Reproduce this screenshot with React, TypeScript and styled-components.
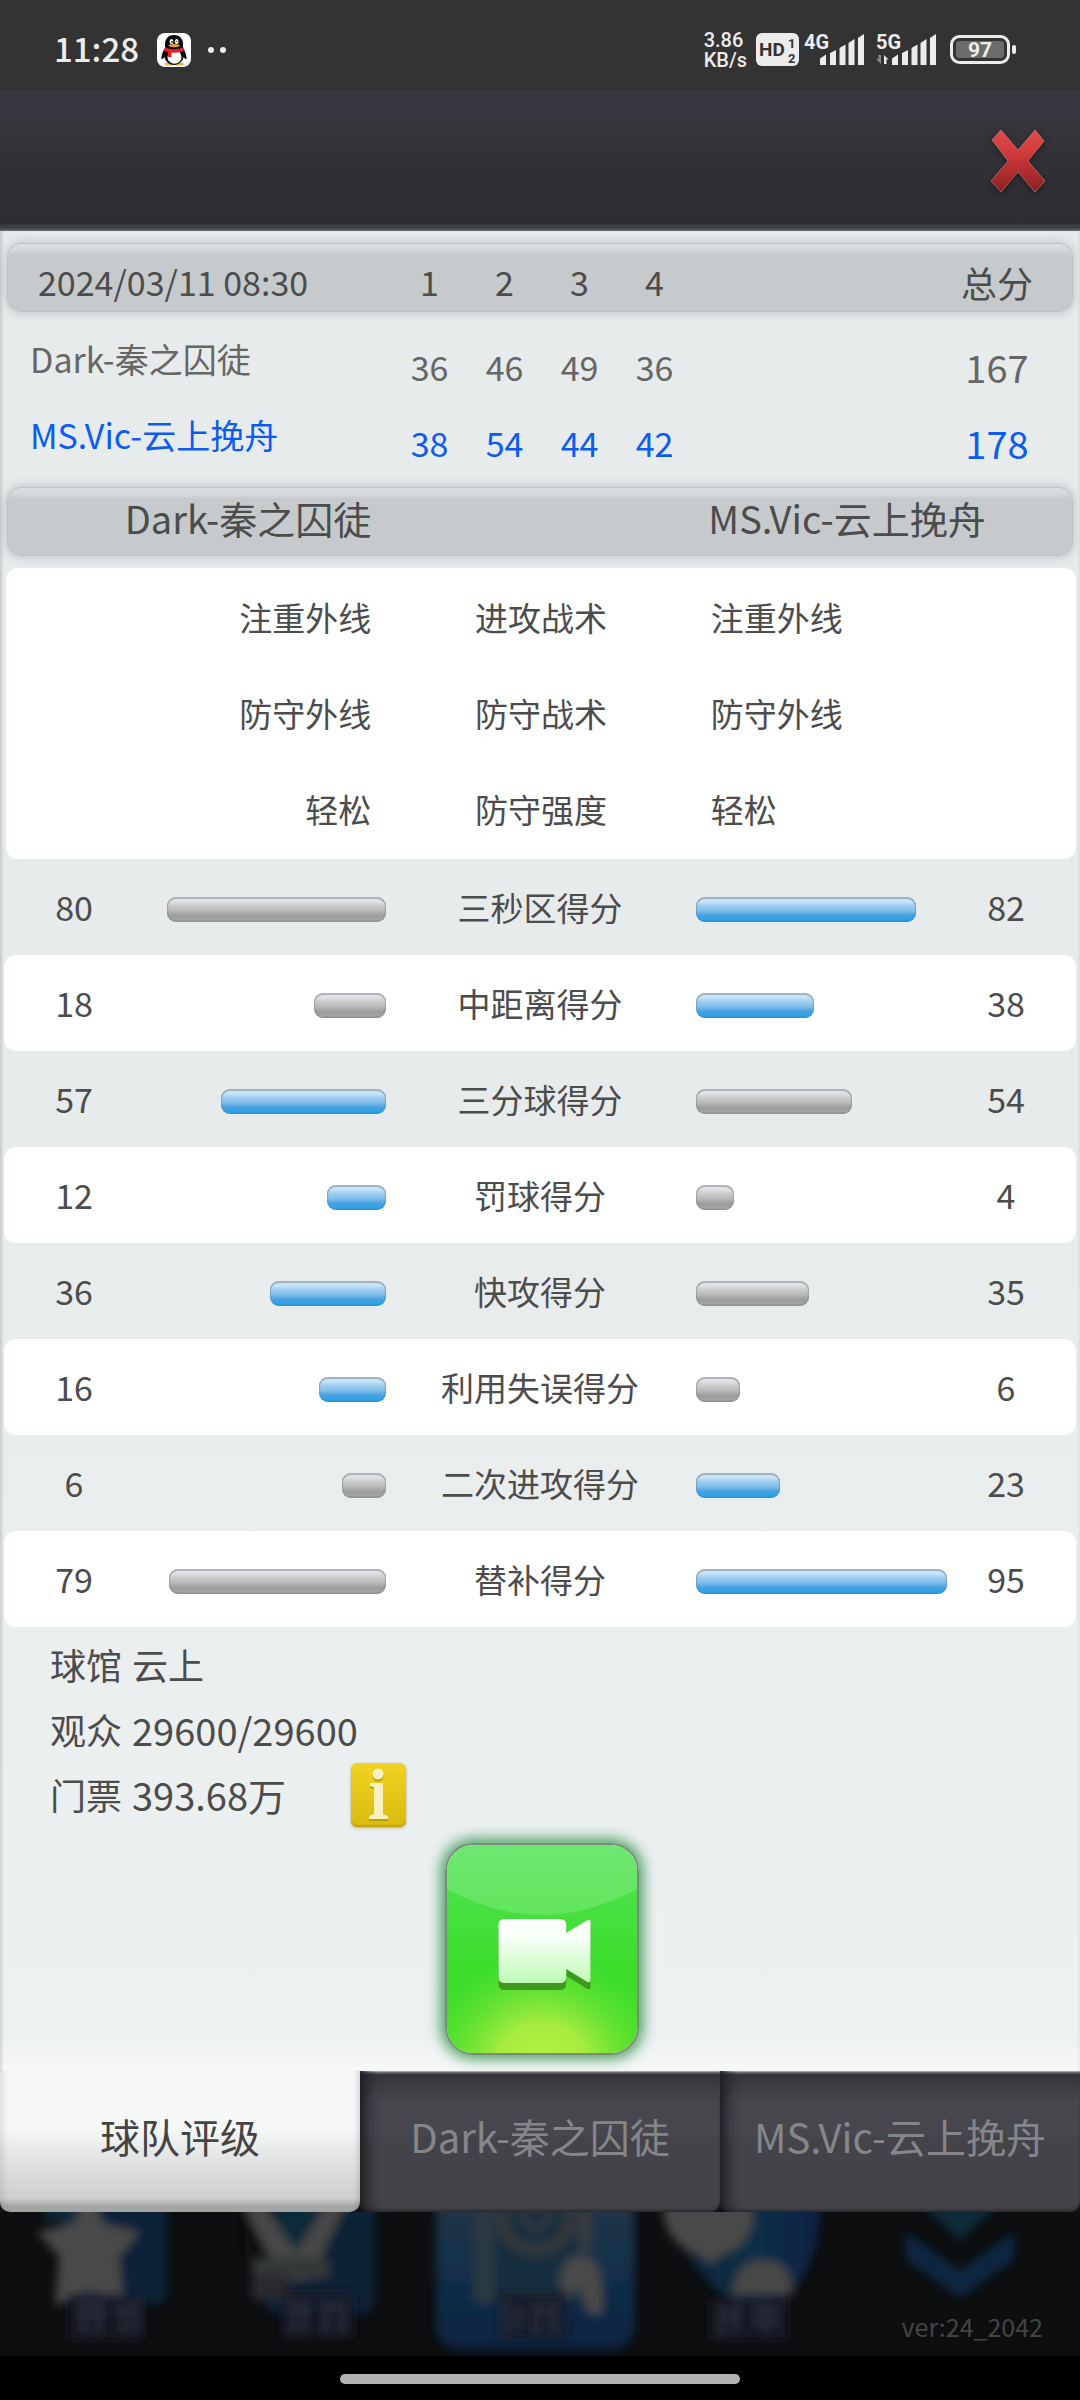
import React, { useState } from 'react';
import styled, { createGlobalStyle, css } from 'styled-components';

const GlobalStyle = createGlobalStyle`
  *, *::before, *::after { box-sizing: border-box; }
  body { margin: 0; background: #000; }
  button, table, th, td, dl, dt, dd, h2 {
    font: inherit; color: inherit; margin: 0; padding: 0; border: 0; background: none;
  }
`;

const Page = styled.div`
  display: flex;
  flex-direction: column;
  min-height: 100vh;
  font-family: "Noto Sans CJK SC", "Noto Sans", sans-serif;
  font-size: 34px;
  line-height: 48px;
  color: #4c4c4c;
  white-space: nowrap;
`;

/* ---------- status bar ---------- */

const StatusBar = styled.div`
  display: flex;
  align-items: center;
  height: 90px;
  padding: 10px 64px 0 54px;
  background: #333;
  color: #ececec;
`;

const Clock = styled.time`
  font-size: 33px;
  font-weight: 500;
  margin: -4px 18px 0 0;
`;

const StatusDots = styled.span`
  display: flex;
  gap: 6px;
  margin-left: 17px;
  &::before, &::after {
    content: "";
    width: 6px;
    height: 6px;
    border-radius: 50%;
    background: #ececec;
  }
`;

const StatusRight = styled.div`
  display: flex;
  align-items: center;
  margin-left: auto;
  font-family: Roboto, sans-serif;
`;

const NetSpeed = styled.span`
  display: flex;
  flex-direction: column;
  margin-right: 9px;
  font-size: 20px;
  font-weight: 500;
  line-height: 20px;
`;

const SignalIcon = styled.svg`
  width: 62px;
  height: 46px;
  margin-left: 5px;
  & + & { margin: 0 12px 0 10px; }
  text { font-weight: 700; font-size: 20px; }
`;

/* ---------- title bar ---------- */

const TitleBar = styled.header`
  display: flex;
  justify-content: flex-end;
  align-items: center;
  height: 141px;
  padding: 0 34px 0 0;
  background: linear-gradient(#38373c 0, #393643 18px, #35343a 36px, #302f34 90px, #2e2d32 134px, #3a3f41 135px, #3a3f41 138px, #6a7270 141px);
`;

const CloseButton = styled.button`
  display: block;
  cursor: pointer;
  svg { display: block; filter: drop-shadow(0 2px 3px #0006); }
`;

/* ---------- report ---------- */

const Report = styled.main`
  display: flex;
  flex-direction: column;
  padding: 13px 4px 16px;
  background: linear-gradient(#e7ebec 0, #e7ebec 50%, #edf1f2 98%, #f7f8f8 100%);
  box-shadow: inset 3px 0 3px -1px #0002, inset -3px 0 3px -2px #0001;
`;

const barLook = css`
  height: 67px;
  margin: 0 4px;
  border-radius: 14px;
  background: linear-gradient(#dbdfe1 0, #d3d7d9 7px, #c6cacd 11px, #c6cacd 100%);
  box-shadow: 0 0 0 1px #bdc1c2, 0 0 8px 3px #8d969966;
`;

const ScoreTable = styled.table`
  display: block;
  thead, tbody { display: block; }
  th { font-weight: 400; }
`;

const scoreColumns = css`
  display: grid;
  grid-template-columns: 384fr repeat(4, 75fr) 230fr 150fr;
  align-items: center;
`;

const ScoreHead = styled.tr`
  ${barLook}
  ${scoreColumns}
  padding-top: 8px;
  th:first-child { text-align: left; padding-left: 30px; }
  th:last-child { grid-column: 7; font-size: 36px; }
`;

const ScoreRow = styled.tr<{ $winner?: boolean }>`
  ${scoreColumns}
  height: 76px;
  margin: 0 4px;
  color: ${p => (p.$winner ? '#0c5cf2' : '#666')};
  text-align: center;
  th { text-align: left; padding: 0 0 16px 22px; }
  td:last-child { grid-column: 7; font-size: 38px; }
`;

const ScoreBody = styled.tbody`
  padding: 18px 0 7px;
`;

const TeamsBar = styled.div`
  ${barLook}
  display: grid;
  grid-template-columns: 480fr 134fr 450fr;
  align-items: center;
  padding-bottom: 8px;
  font-size: 38px;
  text-align: center;
`;

const TeamTitle = styled.h2`
  font-weight: 400;
  &:last-child { grid-column: 3; }
`;

const TacticsTable = styled.table`
  display: block;
  margin: 13px 0 0 2px;
  border-radius: 12px;
  background: #fff;
  font-size: 33px;
  tbody { display: block; padding: 1px 0 2px; }
`;

const TacticsRow = styled.tr`
  display: grid;
  grid-template-columns: 366fr 340fr 366fr;
  align-items: center;
  height: 96px;
  th { font-weight: 400; }
  td:first-child { text-align: right; }
`;

const StatsTable = styled.table`
  display: block;
  tbody { display: block; }
`;

const StatRow = styled.tr`
  display: grid;
  grid-template-columns: 124fr 258fr 308fr 258fr 124fr;
  align-items: center;
  height: 96px;
  border-radius: 12px;
  text-align: center;
  &:nth-child(even) { background: #fff; }
  th { font-weight: 400; font-size: 33px; }
`;

const StatValue = styled.td<{ $side: 'home' | 'away' }>`
  padding: ${p => (p.$side === 'home' ? '0 0 0 16px' : '0 16px 0 0')};
`;

const Track = styled.td<{ $side: 'home' | 'away' }>`
  display: flex;
  justify-content: ${p => (p.$side === 'home' ? 'flex-end' : 'flex-start')};
  padding: ${p => (p.$side === 'home' ? '4px 0 0' : '4px 0 0 2px')};
`;

const Bar = styled.div<{ $lead: boolean }>`
  height: 25px;
  border-radius: 9px;
  background: ${p =>
    p.$lead
      ? 'linear-gradient(#d3ecf9 0, #c5e3f6 20%, #a9d1f1 30%, #7fbdea 55%, #4da2df 72%, #2ea4e8 88%, #2b93d6 100%)'
      : 'linear-gradient(#ececec 0, #e0e0e0 20%, #cecece 32%, #b8b8b8 55%, #9c9c9c 75%, #a2a2a2 90%, #8f8f8f 100%)'};
  box-shadow: inset 0 2px 1px #56667566, inset 1px 0 1px #56667544, inset -1px 0 1px #56667544;
`;

const Arena = styled.dl`
  display: flex;
  flex-direction: column;
  padding: 5px 46px 0;
  font-size: 36px;
  line-height: 65px;
`;

const ArenaLine = styled.div`
  display: flex;
  align-items: center;
  gap: 10px;
`;

const ArenaValue = styled.dd`
  min-width: 209px;
`;

const ArenaFigure = styled(ArenaValue)`
  font-size: 38px;
`;

const InfoButton = styled.button`
  width: 55px;
  height: 64px;
  border-radius: 6px;
  background: linear-gradient(#f0d324, #d9bb10);
  box-shadow: inset 0 -2px 1px #a8900c88, 0 1px 3px #8a7a2088;
  cursor: pointer;
  svg { display: block; }
`;

const ReplayButton = styled.button`
  align-self: center;
  width: 194px;
  height: 212px;
  margin: 16px 0 0 4px;
  border-radius: 28px;
  overflow: hidden;
  border: 2px solid #7b8a7b;
  box-shadow: 0 0 14px 4px #1f8a3ccc;
  cursor: pointer;
  svg { display: block; width: 100%; height: 100%; }
`;

/* ---------- tabs ---------- */

const Tabs = styled.div`
  display: grid;
  grid-template-columns: repeat(3, minmax(0, 1fr));
  background: #101214;
`;

const Tab = styled.button<{ $active: boolean }>`
  height: 141px;
  padding-bottom: 11px;
  border-radius: 0 0 10px 10px;
  font-size: 40px;
  cursor: pointer;
  ${p =>
    p.$active
      ? css`
          color: #444;
          background: linear-gradient(#f6f9f8 0, #f6f9f8 40%, #e4e6e5 60%, #cfd1d0 90%, #a4a6a4 96%, #a4a6a4 100%);
          box-shadow: inset 8px 0 8px -6px #0002, inset -6px 0 6px -5px #0003;
        `
      : css`
          color: #85868a;
          background: linear-gradient(#c9cccc 0, #55575a 2px, #35343a 4px, #3b3a40 12px, #47464d 32px, #48474e 64px, #444349 66px, #444349 100%);
          box-shadow: inset 16px 0 14px -10px #1c1b20, inset 0 -3px 3px -1px #2c2b30;
        `}
`;

/* ---------- dimmed app navigation behind the report ---------- */

const Backdrop = styled.footer`
  display: grid;
  height: 144px;
  overflow: hidden;
  background: #0d0e10;
  > * { grid-area: 1 / 1; }
  > svg { width: 100%; height: 144px; }
`;

const Version = styled.small`
  align-self: end;
  justify-self: end;
  padding: 0 37px 10px 0;
  font-size: 25px;
  line-height: 40px;
  color: #444;
  z-index: 1;
`;

const GestureArea = styled.div`
  display: flex;
  justify-content: center;
  flex: 1;
  padding-top: 18px;
  background: #000;
  &::before {
    content: "";
    width: 37%;
    height: 10px;
    border-radius: 5px;
    background: #b2b2b2;
  }
`;

const HOME = 'Dark-秦之囚徒';
const AWAY = 'MS.Vic-云上挽舟';

const scores = [
  { team: HOME, quarters: [36, 46, 49, 36], total: 167 },
  { team: AWAY, quarters: [38, 54, 44, 42], total: 178 },
];

const tactics = [
  ['注重外线', '进攻战术', '注重外线'],
  ['防守外线', '防守战术', '防守外线'],
  ['轻松', '防守强度', '轻松'],
];

const stats: [number, string, number][] = [
  [80, '三秒区得分', 82],
  [18, '中距离得分', 38],
  [57, '三分球得分', 54],
  [12, '罚球得分', 4],
  [36, '快攻得分', 35],
  [16, '利用失误得分', 6],
  [6, '二次进攻得分', 23],
  [79, '替补得分', 95],
];

const barWidth = (value: number) => `${Math.round(((value + 13) / 110) * 100)}%`;

function QQIcon() {
  return (
    <svg width="34" height="34" viewBox="0 0 34 34" aria-label="QQ">
      <rect width="34" height="34" rx="8" fill="#fff" />
      <ellipse cx="12" cy="31" rx="4.5" ry="1.6" fill="#e8b84a" />
      <ellipse cx="22.5" cy="31" rx="4.5" ry="1.6" fill="#e8b84a" />
      <path d="M17 2c-6 0-9 4-9 9v4c-2 3-4 8-3.5 11 .5 1 2-.5 3-2 .5 4 4.500 8 9.500 8s9-4 9.500-8c1 1.500 2.500 3 3 2 .5-3-1.500-8-3.500-11v-4c0-5-3-9-9-9z" fill="#0a0a0a" />
      <ellipse cx="17.5" cy="24" rx="7" ry="6.8" fill="#fff" />
      <path d="M8 14c5 3 13 3 18.500 0l.5 4c-4 1.500-8 2-12.500 1.500V24h-3.500v-5c-1.500-.3-3-.6-4-1z" fill="#e3202a" />
      <ellipse cx="14.5" cy="8.5" rx="1.9" ry="2.6" fill="#fff" />
      <ellipse cx="19.7" cy="8.5" rx="1.9" ry="2.6" fill="#fff" />
      <circle cx="15" cy="8.8" r=".9" />
      <path d="M18.700 9c.5-.9 1.300-.9 1.700 0" stroke="#000" fill="none" strokeWidth=".7" />
      <ellipse cx="17.2" cy="12.6" rx="5.6" ry="1.7" fill="#e9a51c" />
    </svg>
  );
}

function Signal({ label, data }: { label: string; data?: boolean }) {
  return (
    <SignalIcon viewBox="0 -6 62 46" fill="#ececec" aria-label={label}>
      <text x="0" y="16">{label}</text>
      <path d="M16 25.500l6-4V32h-6zM26 20l6-3v15h-6zM35.500 15l6-3.500V32h-6zM44.500 10l6-4v26h-6zM54 5l6-4v31h-6z" />
      {data && (
        <>
          <path d="M0 26h2.500v-4H5v9z" fill="#888" />
          <path d="M8 31v-9l4.500 4.500H10.500V31z" />
        </>
      )}
    </SignalIcon>
  );
}

function BatteryIcon() {
  return (
    <svg width="66" height="30" viewBox="0 0 66 30" aria-label="97%">
      <rect x="1.5" y="1.5" width="57" height="26" rx="8" fill="none" stroke="#ececec" strokeWidth="3" />
      <rect x="6" y="6" width="48" height="17" rx="3" fill="#6b6b6b" />
      <rect x="62" y="10" width="4" height="9" rx="2" fill="#ececec" />
      <text x="30" y="22" textAnchor="middle" fontSize="21" fontWeight="700" fill="#ececec">97</text>
    </svg>
  );
}

function HdIcon() {
  return (
    <svg width="43" height="34" viewBox="0 0 43 34" aria-label="HD">
      <rect width="43" height="33" rx="6" fill="#ececec" />
      <g fill="#333" fontWeight="700">
        <text x="3" y="23" fontSize="19">HD</text>
        <text x="32" y="15" fontSize="13">1</text>
        <text x="32" y="30" fontSize="13">2</text>
      </g>
    </svg>
  );
}

function CloseIcon() {
  return (
    <svg width="56" height="66" viewBox="0 0 56 66">
      <defs>
        <linearGradient id="cross" x1="0" y1="0" x2="0" y2="1">
          <stop offset="0" stopColor="#e24a48" />
          <stop offset=".35" stopColor="#d23b3c" />
          <stop offset="1" stopColor="#8a1f22" />
        </linearGradient>
      </defs>
      <path d="M11 2L2 12l16 21L1 53l10 11 17-20 17 20 10-11-17-20 16-20-9-11-17 20z" fill="url(#cross)" stroke="#f3a3a0" strokeOpacity=".45" strokeLinejoin="round" />
    </svg>
  );
}

function InfoIcon() {
  return (
    <svg width="55" height="64" viewBox="0 0 55 64">
      <g fill="#a08a10" opacity=".6" transform="translate(0 2)">
        <circle cx="27" cy="11" r="5.5" />
        <path d="M19 20h13v31l5 2v3H18v-3l5-2V24l-4-1z" />
      </g>
      <g fill="#f8f0bd">
        <circle cx="27" cy="11" r="5.5" />
        <path d="M19 20h13v31l5 2v3H18v-3l5-2V24l-4-1z" />
      </g>
    </svg>
  );
}

function ReplayIcon() {
  return (
    <svg viewBox="0 0 188 208" preserveAspectRatio="none">
      <defs>
        <linearGradient id="green" x1="0" y1="0" x2="0" y2="1">
          <stop offset="0" stopColor="#52e356" />
          <stop offset=".6" stopColor="#3cdd2c" />
          <stop offset="1" stopColor="#4ade28" />
        </linearGradient>
        <radialGradient id="glow" cx="94" cy="224" r="115" gradientUnits="userSpaceOnUse">
          <stop offset="0" stopColor="#b4f53c" />
          <stop offset=".4" stopColor="#aeed42" stopOpacity=".92" />
          <stop offset="1" stopColor="#6ae235" stopOpacity="0" />
        </radialGradient>
        <linearGradient id="cam" x1="0" y1="0" x2="0" y2="1">
          <stop offset="0" stopColor="#fff" />
          <stop offset=".25" stopColor="#fafffa" />
          <stop offset="1" stopColor="#c0fbb8" />
        </linearGradient>
      </defs>
      <rect width="188" height="208" fill="url(#green)" />
      <rect width="188" height="208" fill="url(#glow)" />
      <path d="M0 0h188v44Q94 96 0 44z" fill="#fff" opacity=".16" />
      <path d="M57 79h55q6 0 6 6v8l21-13q3-1 3 2v60q0 3-3 2l-21-13v8q0 6-6 6H57q-6 0-6-6V85q0-6 6-6z" fill="#3d9a1c" />
      <path d="M57 74h55q6 0 6 6v8l21-13q3-1 3 2v58q0 3-3 2l-21-13v8q0 6-6 6H57q-6 0-6-6V80q0-6 6-6z" fill="url(#cam)" />
    </svg>
  );
}

function DimmedNav() {
  return (
    <svg viewBox="0 0 1080 144" preserveAspectRatio="xMidYMid slice" aria-hidden="true">
      <defs>
        <filter id="soft" x="-10%" y="-20%" width="120%" height="140%">
          <feGaussianBlur stdDeviation="5" />
        </filter>
        <filter id="softLabel" x="-10%" y="-20%" width="120%" height="140%">
          <feGaussianBlur stdDeviation="4" />
        </filter>
        <linearGradient id="tile" x1="0" y1="0" x2="0" y2="1">
          <stop offset="0" stopColor="#2c3644" />
          <stop offset=".5" stopColor="#14304a" />
          <stop offset="1" stopColor="#082340" />
        </linearGradient>
        <linearGradient id="balloon" x1="0" y1="0" x2="1" y2="0">
          <stop offset="0" stopColor="#0b1f38" />
          <stop offset=".5" stopColor="#0d3044" />
          <stop offset="1" stopColor="#0b2145" />
        </linearGradient>
      </defs>
      <g filter="url(#soft)">
        <rect x="60" y="-40" width="107" height="132" rx="12" fill="#0a2138" />
        <path d="M42-20h60v26l-56 2z" fill="#0a2c38" />
        <path d="M88-22l16 34 36 8-21 24 4 46-34-10-34 14 4-50-22-24 36-8z" fill="#484848" />
        <rect x="265" y="-40" width="110" height="142" rx="14" fill="#0a2034" />
        <path d="M245-20h30v60h-30z" fill="#0d0e10" />
        <path d="M268-20h52L296 45z" fill="#0b2c38" />
        <path d="M240-12h21l35 52 32-52h20l-38 80h-28z" fill="#474747" />
        <path d="M252 46h76v20h-76z" fill="#363738" />
        <path d="M252 62h38v26h-38z" fill="#292b2d" />
        <rect x="436" y="-40" width="199" height="178" rx="24" fill="url(#tile)" />
        <rect x="474" y="-10" width="20" height="102" rx="8" fill="#2a3840" />
        <rect x="578" y="-10" width="14" height="50" fill="#363b41" />
        <rect x="496" y="-10" width="80" height="100" fill="#182f3e" />
        <circle cx="536" cy="4" r="34" fill="none" stroke="#31363b" strokeWidth="15" />
        <circle cx="536" cy="4" r="12" fill="none" stroke="#31363b" strokeWidth="8" />
        <path d="M560 76q0-32 20-32 22 0 22 36v22h-14l-9-28-10 14z" fill="#4a4a48" />
        <path d="M672-20h148q4 66-32 104-34 30-64 0-36-30-50-70z" fill="url(#balloon)" />
        <path d="M664-10h88v24q-8 22-28 28l-14 10-12-10q-28-8-34-36z" fill="#484848" />
        <path d="M732 84q2-36 32-36t28 36z" fill="#464644" />
        <path d="M922-6h76l-38 34z" fill="#0b2b38" />
        <path d="M906 20l54 38 54-38v28l-54 38-54-38z" fill="#0a2540" />
      </g>
      <g filter="url(#softLabel)">
        <path d="M68 84h76v44H68zM282 80h72v46h-72zM500 82h66v44h-66zM710 86h78v42h-78z" fill="#161a24" opacity=".85" />
        <path d="M78 90h28M76 102h30M84 88v34M98 88v34M114 98h20M124 92v30M136 88v32M292 88v34M304 88v32M292 98h18M320 94h24M326 90v32M342 90v32M506 90v32M518 94v24M536 90v32M536 98h18M554 90v32M722 92v32M736 90v30M722 104h18M752 98h28M766 92v30M752 110h28" stroke="#292d3b" strokeWidth="5" fill="none" />
      </g>
    </svg>
  );
}

export default function App() {
  const [tab, setTab] = useState(0);
  return (
    <Page>
      <GlobalStyle />
      <StatusBar>
        <Clock>11:28</Clock>
        <QQIcon />
        <StatusDots />
        <StatusRight>
          <NetSpeed>
            <span>3.86</span>
            <span>KB/s</span>
          </NetSpeed>
          <HdIcon />
          <Signal label="4G" />
          <Signal label="5G" data />
          <BatteryIcon />
        </StatusRight>
      </StatusBar>

      <TitleBar>
        <CloseButton type="button" aria-label="关闭">
          <CloseIcon />
        </CloseButton>
      </TitleBar>

      <Report>
        <ScoreTable>
          <thead>
            <ScoreHead>
              <th>2024/03/11 08:30</th>
              {[1, 2, 3, 4].map(q => (
                <th key={q}>{q}</th>
              ))}
              <th>总分</th>
            </ScoreHead>
          </thead>
          <ScoreBody>
            {scores.map(row => (
              <ScoreRow key={row.team} $winner={row.total === 178}>
                <th scope="row">{row.team}</th>
                {row.quarters.map((score, i) => (
                  <td key={i}>{score}</td>
                ))}
                <td>{row.total}</td>
              </ScoreRow>
            ))}
          </ScoreBody>
        </ScoreTable>

        <TeamsBar>
          <TeamTitle>{HOME}</TeamTitle>
          <TeamTitle>{AWAY}</TeamTitle>
        </TeamsBar>

        <TacticsTable>
          <tbody>
            {tactics.map(([home, name, away]) => (
              <TacticsRow key={name}>
                <td>{home}</td>
                <th scope="row">{name}</th>
                <td>{away}</td>
              </TacticsRow>
            ))}
          </tbody>
        </TacticsTable>

        <StatsTable>
          <tbody>
            {stats.map(([home, name, away]) => (
              <StatRow key={name}>
                <StatValue $side="home">{home}</StatValue>
                <Track $side="home">
                  <Bar $lead={home > away} style={{ width: barWidth(home) }} />
                </Track>
                <th scope="row">{name}</th>
                <Track $side="away">
                  <Bar $lead={away > home} style={{ width: barWidth(away) }} />
                </Track>
                <StatValue $side="away">{away}</StatValue>
              </StatRow>
            ))}
          </tbody>
        </StatsTable>

        <Arena>
          <ArenaLine>
            <dt>球馆</dt>
            <ArenaValue>云上</ArenaValue>
          </ArenaLine>
          <ArenaLine>
            <dt>观众</dt>
            <ArenaFigure>29600/29600</ArenaFigure>
          </ArenaLine>
          <ArenaLine>
            <dt>门票</dt>
            <ArenaFigure>393.68万</ArenaFigure>
            <InfoButton type="button" aria-label="门票说明">
              <InfoIcon />
            </InfoButton>
          </ArenaLine>
        </Arena>

        <ReplayButton type="button" aria-label="比赛录像">
          <ReplayIcon />
        </ReplayButton>
      </Report>

      <Tabs role="tablist">
        {['球队评级', HOME, AWAY].map((label, i) => (
          <Tab key={label} type="button" role="tab" aria-selected={tab === i} $active={tab === i} onClick={() => setTab(i)}>
            {label}
          </Tab>
        ))}
      </Tabs>

      <Backdrop>
        <DimmedNav />
        <Version>ver:24_2042</Version>
      </Backdrop>
      <GestureArea />
    </Page>
  );
}
